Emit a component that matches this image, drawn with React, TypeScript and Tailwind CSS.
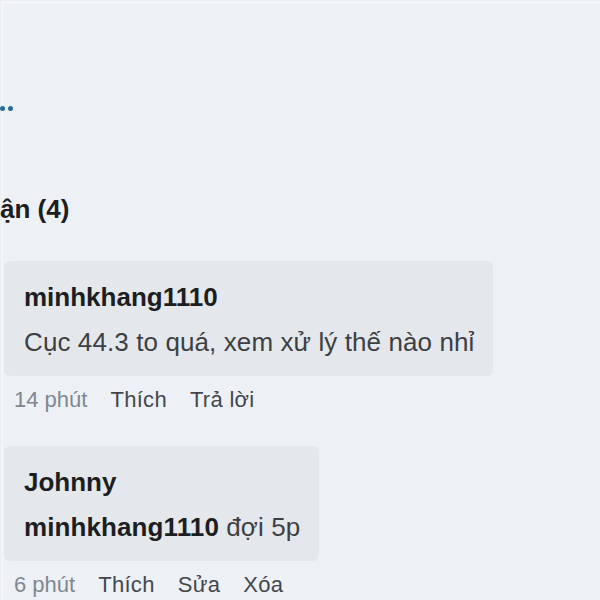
import React from "react";

type Comment = {
  author: string;
  mention?: string;
  text: string;
  time: string;
  actions: string[];
  width: string;
};

const comments: Comment[] = [
  {
    author: "minhkhang1110",
    text: "Cục 44.3 to quá, xem xử lý thế nào nhỉ",
    time: "14 phút",
    actions: ["Thích", "Trả lời"],
    width: "w-[489px]",
  },
  {
    author: "Johnny",
    mention: "minhkhang1110",
    text: "đợi 5p",
    time: "6 phút",
    actions: ["Thích", "Sửa", "Xóa"],
    width: "w-[315px]",
  },
];

function CommentItem({ c }: { c: Comment }) {
  return (
    <div className="flex flex-col">
      {/* bubble */}
      <div className={`${c.width} ml-[1px] rounded-[6px] bg-[#e4e8ed] px-[20px] pt-[18px] pb-[16px] flex flex-col gap-[9px]`}>
        <div className="text-[26px] leading-[36px] font-bold text-[#1c1e21]">{c.author}</div>
        <div className="text-[26px] leading-[36px] tracking-[0.1px] text-[#3d3f43] whitespace-nowrap">
          {c.mention && <span className="font-bold text-[#1c1e21]">{c.mention} </span>}
          {c.text}
        </div>
      </div>

      {/* actions */}
      <div className="mt-[10px] ml-[11px] flex gap-[23px] text-[22px] leading-[28px]">
        <span className="text-[#7e8892]">{c.time}</span>
        {c.actions.map((a) => (
          <span key={a} className="text-[#43474d] tracking-[0.3px]">
            {a}
          </span>
        ))}
      </div>
    </div>
  );
}

export default function App() {
  return (
    <div className="w-[600px] h-[600px] overflow-hidden bg-[#edf1f5] pt-[2px] pl-[2px] font-['Liberation_Sans',Arial,sans-serif]">
      <div className="h-full border-l border-t border-[#f7f9fb] flex flex-col">
        {/* trailing dots of a cut-off link */}
        <div className="mt-[103px] -ml-[3px] flex gap-[3px]">
          <span className="w-[5px] h-[5px] rounded-full bg-[#2a6a96]" />
          <span className="w-[5px] h-[5px] rounded-full bg-[#2a6a96]" />
        </div>

        <div className="mt-[80px] -ml-[3px] text-[26px] leading-[36px] font-bold text-[#1c1e21] whitespace-nowrap">
          ận (4)
        </div>

        <div className="mt-[34px] flex flex-col gap-[32px]">
          {comments.map((c) => (
            <CommentItem key={c.time} c={c} />
          ))}
        </div>
      </div>
    </div>
  );
}
